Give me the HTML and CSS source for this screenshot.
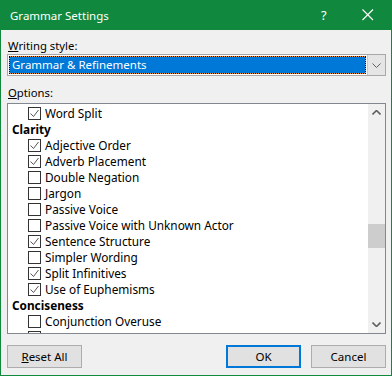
FILE: index.html
```html
<!DOCTYPE html>
<html>
<head>
<meta charset="utf-8">
<link rel="stylesheet" href="styles.css">
</head>
<body>
<div class="dialog">
  <div class="titlebar">
    <span class="title">Grammar Settings</span>
    <span class="help">?</span>
    <span class="close"><svg width="12" height="12" viewBox="0 0 12 12"><path d="M0.5 0.5 L11 11 M11 0.5 L0.5 11" stroke="#fff" stroke-width="1.1" fill="none"/></svg></span>
  </div>
  <div class="content">
    <div class="label label-style"><u>W</u>riting style:</div>
    <div class="combo">
      <div class="combo-field"><div class="focus"><div class="selected">Grammar &amp; Refinements</div></div></div>
      <div class="combo-btn"><svg width="9" height="5" viewBox="0 0 9 5"><path d="M0.5 0.5 L4.5 4.5 L8.5 0.5" stroke="#606060" stroke-width="1" fill="none"/></svg></div>
    </div>
    <div class="label label-options"><u>O</u>ptions:</div>
    <div class="listbox">
      <div class="items">
        <div class="item"><span class="cb on"></span>Word Split</div>
        <div class="cat">Clarity</div>
        <div class="item"><span class="cb on"></span>Adjective Order</div>
        <div class="item"><span class="cb on"></span>Adverb Placement</div>
        <div class="item"><span class="cb"></span>Double Negation</div>
        <div class="item"><span class="cb"></span>Jargon</div>
        <div class="item"><span class="cb"></span>Passive Voice</div>
        <div class="item"><span class="cb"></span>Passive Voice with Unknown Actor</div>
        <div class="item"><span class="cb on"></span>Sentence Structure</div>
        <div class="item"><span class="cb"></span>Simpler Wording</div>
        <div class="item"><span class="cb on"></span>Split Infinitives</div>
        <div class="item"><span class="cb on"></span>Use of Euphemisms</div>
        <div class="cat">Conciseness</div>
        <div class="item"><span class="cb"></span>Conjunction Overuse</div>
        <div class="item"><span class="cb"></span></div>
      </div>
      <div class="scrollbar">
        <div class="sb-btn"><svg width="9" height="5" viewBox="0 0 9 5"><path d="M0.5 4.5 L4.5 0.5 L8.5 4.5" stroke="#606060" stroke-width="1.6" fill="none"/></svg></div>
        <div class="sb-track"><div class="sb-thumb"></div></div>
        <div class="sb-btn"><svg width="9" height="5" viewBox="0 0 9 5"><path d="M0.5 0.5 L4.5 4.5 L8.5 0.5" stroke="#606060" stroke-width="1.6" fill="none"/></svg></div>
      </div>
    </div>
    <div class="buttons">
      <button class="btn reset"><u>R</u>eset All</button>
      <span class="spacer"></span>
      <button class="btn ok">OK</button>
      <button class="btn">Cancel</button>
    </div>
  </div>
</div>
</body>
</html>
```

FILE: styles.css
```css
html, body { margin: 0; padding: 0; }
body { font-family: "Noto Sans", "Open Sans", sans-serif; font-size: 12px; color: #000; }
.dialog {
  width: 392px; height: 376px; box-sizing: border-box;
  border: 1px solid #10893e; border-top: 0;
  background: #f0f0f0; display: flex; flex-direction: column;
}
.titlebar {
  height: 30px; flex: none; margin: 0 -1px; background: #10893e; color: #fff;
  display: flex; align-items: center; font-size: 11.5px;
}
.title { padding-left: 10px; flex: 1; }
.help { width: 10px; margin-right: 31px; font-size: 13px; }
.close { width: 12px; margin-right: 18px; display: flex; }
.content { flex: 1; padding: 0 5px 0 6px; display: flex; flex-direction: column; }
.label { line-height: 16px; height: 16px; padding-left: 1px; font-size: 11.3px; }
.label-style { margin-top: 8px; margin-bottom: 0; }
.combo {
  height: 22px; box-sizing: border-box; border: 1px solid #a8a8a8; background: #fff;
  display: flex; margin-top: 0;
}
.combo-field { flex: 1; padding: 1px; }
.focus {
  height: 100%; box-sizing: border-box; border: 1px dotted #000; background: #f29a2e;
}
.selected { height: 100%; background: #0078d7; color: #fff; line-height: 16px; padding-left: 2px; margin: 0; font-size: 11.5px; }
.combo-btn {
  width: 17px; background: #e5e5e5; border-left: 1px solid #c8c8c8;
  display: flex; align-items: center; justify-content: center;
}
.label-options { margin-top: 9px; margin-bottom: 2px; }
.listbox {
  height: 231px; box-sizing: border-box; border: 1px solid #828790; background: #fff;
  display: flex; overflow: hidden;
}
.items { flex: 1; padding-top: 1px; font-size: 11.8px; }
.item, .cat { height: 16px; line-height: 16px; display: flex; align-items: center; white-space: nowrap; }
.cat { font-weight: bold; padding-left: 4px; }
.item { padding-left: 20px; }
.cb {
  width: 13px; height: 13px; box-sizing: border-box; border: 1px solid #333; background: #fff;
  margin-right: 4px; flex: none; position: relative;
}
.cb.on::after {
  content: ""; position: absolute; left: 1px; top: 1px; width: 9px; height: 9px;
  background: no-repeat center / 9px 9px url("data:image/svg+xml,%3Csvg xmlns='http://www.w3.org/2000/svg' width='9' height='9' viewBox='0 0 9 9'%3E%3Cpath d='M0.5 4.5 L3.5 7.5 L8.5 1' stroke='%23555' stroke-width='1' fill='none'/%3E%3C/svg%3E");
}
.scrollbar { width: 17px; background: #f0f0f0; display: flex; flex-direction: column; }
.sb-btn { height: 17px; display: flex; align-items: center; justify-content: center; }
.sb-track { flex: 1; }
.sb-thumb { margin-top: 103px; height: 24px; background: #cdcdcd; }
.buttons { display: flex; gap: 10px; margin-top: 11px; }
.spacer { flex: 1; }
.btn {
  width: 75px; height: 23px; box-sizing: border-box; border: 1px solid #adadad; background: #e1e1e1;
  font-family: inherit; font-size: 11.5px; color: #000; padding: 0; margin: 0;
}
.btn.ok { border: 2px solid #0078d7; }
```
